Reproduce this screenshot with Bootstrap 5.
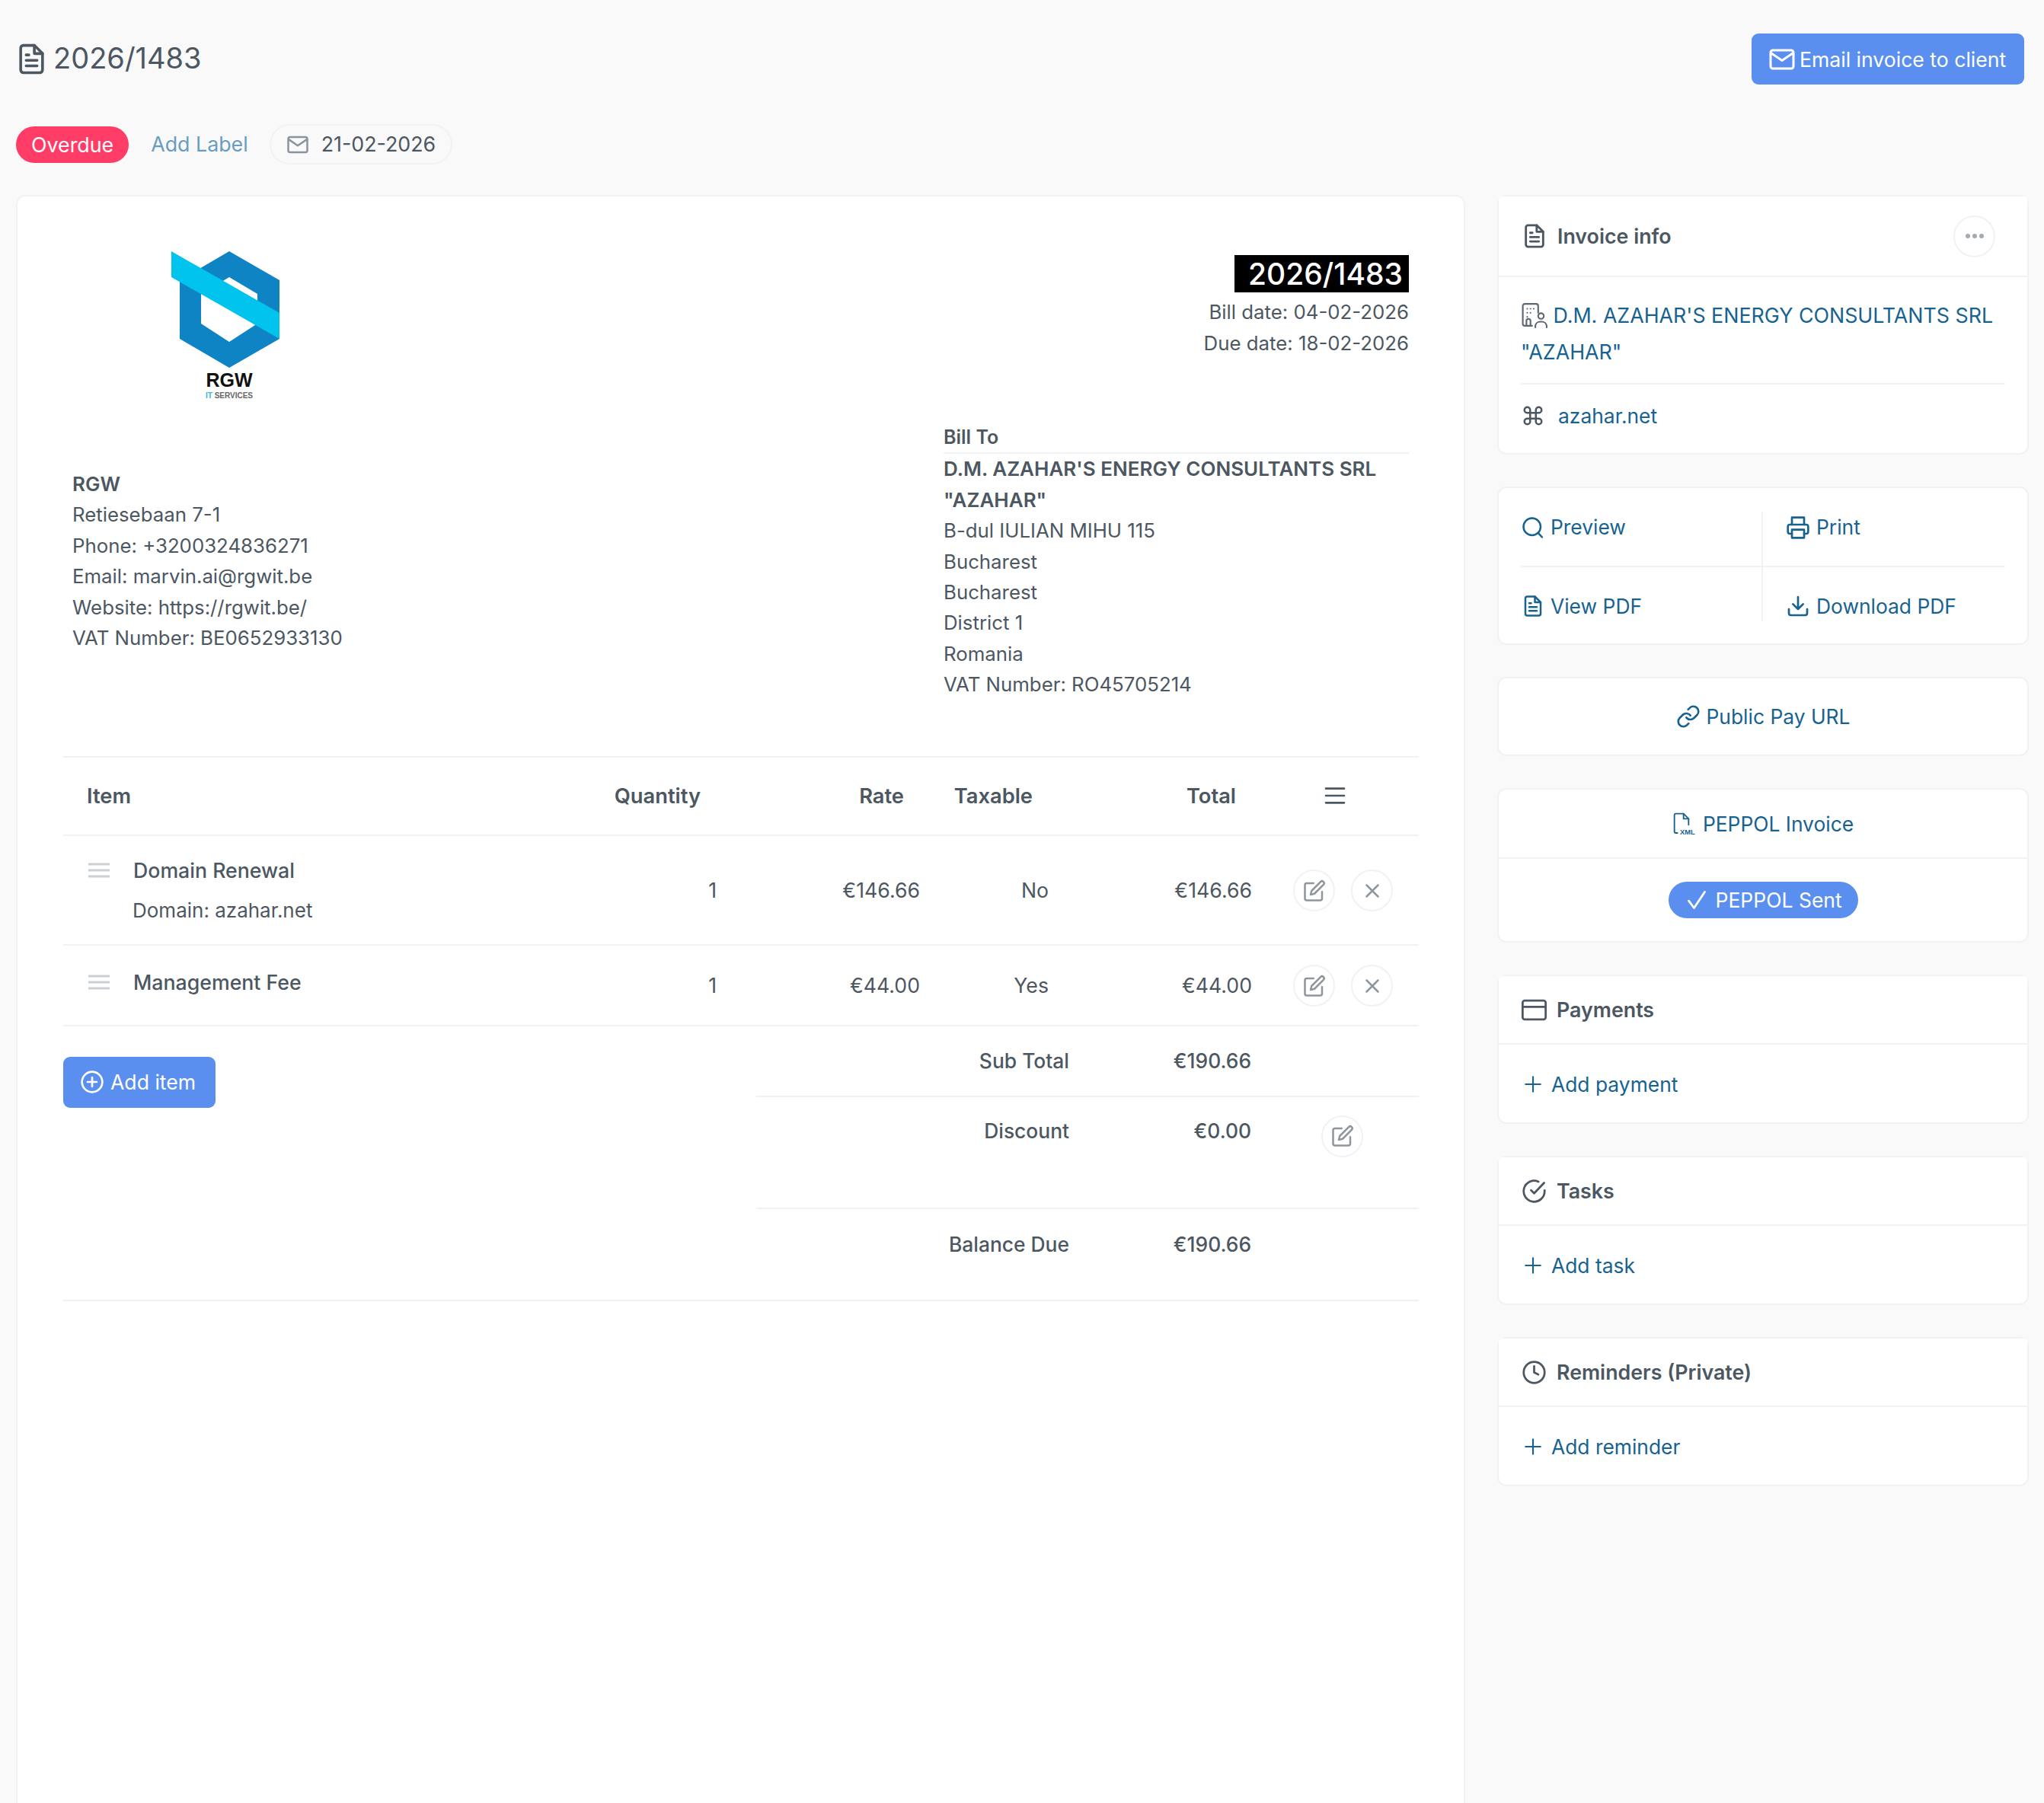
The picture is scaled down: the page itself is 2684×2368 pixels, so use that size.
<!DOCTYPE html>
<html lang="en">
  <head>
    <meta charset="UTF-8" />
    <meta name="viewport" content="width=device-width, initial-scale=1.0" />
    <title>Invoice 2026/1483</title>
    <link
      href="https://cdn.jsdelivr.net/npm/bootstrap@5.3.3/dist/css/bootstrap.min.css"
      rel="stylesheet"
    />
    <style>
      html, body { height: 100%; overflow: hidden; }
      body {
        background: #f9f9fa;
        color: #4c5762;
        font-family: "Inter", "Liberation Sans", sans-serif;
        font-size: 25.8px;
        line-height: 40.4px;
        padding: 44px 20px 0 21px;
      }
      svg.ico {
        fill: none;
        stroke: currentColor;
        stroke-width: 2;
        stroke-linecap: round;
        stroke-linejoin: round;
        flex-shrink: 0;
      }
      .page-title { height: 67px; }
      .page-title h1 { font-size: 38px; font-weight: 400; line-height: 60px; margin: -3px 0 0 7px; }
      .page-title svg { margin-left: -1px; }
      .blue-btn {
        background: #5a8ff0;
        border: 0;
        border-radius: 9px;
        color: #fff;
        font-size: 26.6px;
        line-height: 40px;
      }
      .blue-btn:hover { background: #5a8ff0; color: #fff; }
      .email-btn { gap: 5px; height: 67px; width: 358px; padding: 0 0 0 23px; margin-right: 6px; }
      .label-row { height: 53px; margin-top: 52px; margin-bottom: 40px; font-size: 26.8px; }
      .status-pill {
        background: #ff3c66;
        border-radius: 24px;
        color: #fff;
        height: 48px;
        line-height: 48px;
        padding: 0 20px;
        margin-left: 0;
      }
      .add-label { color: #6a9cc0; margin-left: 29px; text-decoration: none; }
      .date-pill {
        border: 2px solid #f1f2f4;
        border-radius: 27px;
        height: 53px;
        margin-left: 28px;
        padding: 0 20px;
      }
      .date-pill svg { color: #8b949c; }
      .sheet {
        background: #fff;
        border: 2px solid #f1f2f4;
        border-radius: 12px;
        min-height: 2300px;
        padding: 0 59px 0 60px;
        width: 1903px;
      }
      .sheet-top { padding: 77px 13px 0 12px; }
      .sheet-mid { padding: 0 13px 0 12px; }
      .logo-wrap { margin: -5px 0 0 130px; }
      .inv-number {
        background: #000;
        color: #fff;
        display: inline-block;
        font-size: 39px;
        font-weight: 500;
        line-height: 49px;
        margin-bottom: 5px;
        padding: 0 8px 0 18px;
      }
      .inv-dates { line-height: 41px; }
      .sender { margin-top: 92px; }
      .bill-to { margin-top: 30px; width: 611px; }
      .bill-head { border-bottom: 2px solid #f1f2f4; font-weight: 600; font-size: 25px; }
      .strong-line { font-weight: 600; font-size: 26px; }
      .items-table { margin: 73px 0 0; table-layout: fixed; width: 100%; color: #4c5762; font-size: 26.7px; }
      .items-table > :not(caption) > * > * {
        background: transparent;
        border-bottom: 2px solid #f1f2f4;
        color: #4c5762;
        padding: 2px 20px 0 0;
        vertical-align: middle;
      }
      .items-table thead tr { border-top: 2px solid #f1f2f4; height: 103px; }
      .items-table > thead > tr > th { font-size: 27.3px; font-weight: 600; padding-top: 2px; }
      .items-table > thead > tr > th.num { padding-right: 41px; }
      .items-table .num { text-align: right; }
      .items-table tbody tr.row-a { height: 144px; }
      .items-table tbody tr.row-b { height: 106px; }
      .items-table tr > .item-cell { padding-left: 33px; vertical-align: top; }
      .items-table thead tr > .item-cell { padding-left: 31px; vertical-align: middle; }
      .row-a .item-cell { padding-top: 25px; }
      .row-b .item-cell { padding-top: 28px; }
      .menu-ico { margin: -6px 74px 0 0; }
      .drag-ico { color: #ccd0d4; margin-right: 31px; }
      .item-name { font-weight: 500; }
      .item-desc { margin: 13px 0 0 58px; font-size: 26px; }
      .round-btn {
        align-items: center;
        background: #fff;
        border: 2px solid #f1f2f4;
        border-radius: 50%;
        color: #8f969d;
        display: inline-flex;
        height: 55px;
        justify-content: center;
        padding: 0;
        width: 55px;
      }
      .act-gap { gap: 21px; padding-right: 14px; }
      .sheet-foot { border-bottom: 2px solid #f1f2f4; height: 361px; }
      .add-item-btn { height: 67px; width: 200px; margin-top: 40px; padding: 0 0 0 22px; }
      .totals { width: 870px; font-size: 26.4px; }
      .total-row { border-bottom: 2px solid #f1f2f4; font-weight: 500; }
      .total-row:last-child { border-bottom: 0; }
      .total-sub { height: 93px; align-items: center; }
      .total-disc { height: 147px; padding-top: 24px; }
      .total-bal { padding-top: 26px; }
      .total-label { text-align: right; width: 411px; }
      .total-value { text-align: right; width: 239px; }
      .total-action { margin: 0 0 0 92px; }
      .side-stack { gap: 42px; width: 698px; }
      .side-card { border: 2px solid #f1f2f4; border-radius: 12px; --bs-card-bg: #fff; }
      .side-card .card-header {
        align-items: center;
        background: #fff;
        border-bottom: 2px solid #f1f2f4;
        display: flex;
        font-size: 26.8px;
        font-weight: 600;
        height: 90px;
        padding: 0 29px 0 30px;
      }
      .side-card .card-header svg { margin-right: 13px; }
      .side-card .card-body { padding: 0 29px; }
      .info-head.card-header { height: 106px; }
      .more-btn { margin-left: auto; margin-right: 13px; }
      .more-btn svg { margin: 0 !important; }
      .side-link { color: #17628f; font-size: 26.4px; text-decoration: none; }
      .company-link { border-bottom: 2px solid #f1f2f4; display: block; font-size: 26.8px; line-height: 47.5px; margin: 27px 0 0; padding-bottom: 17px; }
      .company-link svg { color: #5d6771; vertical-align: -7px; margin-left: 1px; }
      .site-row { padding: 21px 0 29px; }
      .site-row svg { color: #4c5762; margin: 0 18px 0 1px; }
      .acts-card .card-body { padding-top: 31px; padding-bottom: 29px; }
      .act-cell { padding: 0 0 30px 1px; }
      .act-cell.second { padding-bottom: 0; padding-top: 31px; }
      .act-line { border-bottom: 2px solid #f1f2f4; }
      .act-split { border-right: 2px solid #f1f2f4; }
      .act-cell.act-right { padding-left: 30px; }
      .one-line { height: 100px; }
      .peppol-top { height: 91px; border-bottom: 2px solid #f1f2f4; }
      .peppol-bot { height: 108px; }
      .peppol-pill {
        background: #5a8ff0;
        border-radius: 24px;
        color: #fff;
        font-size: 26.5px;
        height: 48px;
        padding: 0 0 0 23px;
        white-space: nowrap;
        width: 249px;
      }
      .peppol-pill svg.ico { margin-right: 3px; stroke-width: 2.4; }
      .add-row { height: 102px; padding-top: 2px !important; }
      .add-row svg { margin: 0 3px; }
      .xml-mark { fill: currentColor; stroke: none; font-family: "Liberation Sans", sans-serif; font-size: 7px; font-weight: 700; }
    </style>
  </head>
  <body>
    <!--icon sprite-->
    <svg width="0" height="0" class="position-absolute">
      <symbol id="i-file" viewBox="0 0 24 24"><path d="M14 2H6a2 2 0 0 0-2 2v16a2 2 0 0 0 2 2h12a2 2 0 0 0 2-2V8z"/><path d="M14 2v6h6M16 13H8M16 17H8M10 9H8"/></symbol>
      <symbol id="i-mail" viewBox="0 0 24 24"><rect x="2" y="4" width="20" height="16" rx="2"/><path d="M2.5 6.5 12 13l9.5-6.5"/></symbol>
      <symbol id="i-command" viewBox="0 0 24 24"><path d="M18 3a3 3 0 0 0-3 3v12a3 3 0 0 0 3 3 3 3 0 0 0 3-3 3 3 0 0 0-3-3H6a3 3 0 0 0-3 3 3 3 0 0 0 3 3 3 3 0 0 0 3-3V6a3 3 0 0 0-3-3 3 3 0 0 0-3 3 3 3 0 0 0 3 3h12a3 3 0 0 0 3-3 3 3 0 0 0-3-3z"/></symbol>
      <symbol id="i-search" viewBox="0 0 24 24"><circle cx="11" cy="11" r="9"/><path d="m21.5 22-4-4.3"/></symbol>
      <symbol id="i-print" viewBox="0 0 24 24"><path d="M6 9V2h12v7"/><path d="M6 18H4a2 2 0 0 1-2-2v-5a2 2 0 0 1 2-2h16a2 2 0 0 1 2 2v5a2 2 0 0 1-2 2h-2"/><rect x="6" y="14" width="12" height="8"/></symbol>
      <symbol id="i-down" viewBox="0 0 24 24"><path d="M21 15v4a2 2 0 0 1-2 2H5a2 2 0 0 1-2-2v-4"/><path d="m7 10 5 5 5-5M12 15V3"/></symbol>
      <symbol id="i-link" viewBox="0 0 24 24"><path d="M10 13a5 5 0 0 0 7.54.54l3-3a5 5 0 0 0-7.07-7.07l-1.72 1.71"/><path d="M14 11a5 5 0 0 0-7.54-.54l-3 3a5 5 0 0 0 7.07 7.07l1.71-1.71"/></symbol>
      <symbol id="i-card" viewBox="0 0 24 24"><rect x="1" y="3" width="22" height="18" rx="2"/><path d="M1 9h22"/></symbol>
      <symbol id="i-task" viewBox="0 0 24 24"><path d="M22 11.1v.9a10 10 0 1 1-5.9-9.1"/><path d="m21.5 4-9.5 10-3-3"/></symbol>
      <symbol id="i-clock" viewBox="0 0 24 24"><circle cx="12" cy="12" r="10"/><path d="M12 6v6l4 2"/></symbol>
      <symbol id="i-plus" viewBox="0 0 24 24"><path d="M12 3v18M3 12h18"/></symbol>
      <symbol id="i-plusc" viewBox="0 0 24 24"><circle cx="12" cy="12" r="10"/><path d="M12 7.5v9M7.5 12h9"/></symbol>
      <symbol id="i-edit" viewBox="0 0 24 24"><path d="M11 4H4a2 2 0 0 0-2 2v14a2 2 0 0 0 2 2h14a2 2 0 0 0 2-2v-7"/><path d="M18.5 2.5a2.12 2.12 0 0 1 3 3L12 15l-4 1 1-4z"/></symbol>
      <symbol id="i-x" viewBox="0 0 24 24"><path d="M18 6 6 18M6 6l12 12"/></symbol>
      <symbol id="i-menu" viewBox="0 0 24 24"><path d="M3 5h18M3 12h18M3 19h18"/></symbol>
      <symbol id="i-check" viewBox="0 0 24 24"><path d="m3 13 6 8L21 3"/></symbol>
      <symbol id="i-build" viewBox="0 0 32 32"><path d="M13 29H4a2.500 2.500 0 0 1-2.500-2.500v-22A2.500 2.500 0 0 1 4 2h14a2.500 2.500 0 0 1 2.500 2.500V13"/><path d="M7 8h.01M11 8h.01M15 8h.01M7 13h.01M11 13h.01M7 18h.01"/><path d="M6 28v-5a2 2 0 0 1 5 0v5"/><circle cx="24" cy="17" r="3.500"/><path d="M17 31v-2a6 6 0 0 1 6-5h2a6 6 0 0 1 6 5v2"/></symbol>
    </svg>

    <!--title-->
    <div class="page-title d-flex justify-content-between align-items-center">
      <div class="d-flex align-items-center">
        <svg class="ico" width="43" height="43"><use href="#i-file" /></svg>
        <h1>2026/1483</h1>
      </div>
      <button class="btn blue-btn email-btn d-flex align-items-center" type="button">
        <svg class="ico" width="36" height="36"><use href="#i-mail" /></svg>
        <span>Email invoice to client</span>
      </button>
    </div>

    <div class="label-row d-flex align-items-center">
      <span class="status-pill">Overdue</span>
      <a class="add-label" href="#">Add Label</a>
      <span class="date-pill d-flex align-items-center gap-3">
        <svg class="ico" width="30" height="30"><use href="#i-mail" /></svg>
        <span>21-02-2026</span>
      </span>
    </div>

    <div class="d-flex justify-content-between">
      <!--invoice sheet-->
      <main class="sheet">
        <div class="sheet-top d-flex justify-content-between align-items-start">
          <div class="logo-wrap">
            <svg width="144" height="194" viewBox="224 330 144 194">
              <path fill="#0f84c4" fill-rule="evenodd" d="M300 330 366 368V445L300 483 235 445V368ZM300 364 263 386V425L300 449 337 425V386Z" />
              <path fill="#00c4ee" d="M224 330 366 411V445L224 364Z" />
              <text x="300" y="508" text-anchor="middle" font-family="Liberation Sans, sans-serif" font-size="25" font-weight="700" fill="#111">RGW</text>
              <text x="300" y="523" text-anchor="middle" font-family="Liberation Sans, sans-serif" font-size="10" font-weight="700"><tspan fill="#35b8e0">IT</tspan><tspan fill="#666"> SERVICES</tspan></text>
            </svg>
          </div>
          <div class="text-end">
            <div class="inv-number">2026/1483</div>
            <div class="inv-dates">Bill date: 04-02-2026</div>
            <div class="inv-dates">Due date: 18-02-2026</div>
          </div>
        </div>
        <div class="sheet-mid d-flex justify-content-between">
          <div class="sender">
            <div class="strong-line">RGW</div>
            <div>Retiesebaan 7-1</div>
            <div>Phone: +3200324836271</div>
            <div>Email: marvin.ai@rgwit.be</div>
            <div>Website: https://rgwit.be/</div>
            <div>VAT Number: BE0652933130</div>
          </div>
          <div class="bill-to">
            <div class="bill-head">Bill To</div>
            <div class="strong-line">D.M. AZAHAR'S ENERGY CONSULTANTS SRL "AZAHAR"</div>
            <div>B-dul IULIAN MIHU 115</div>
            <div>Bucharest</div>
            <div>Bucharest</div>
            <div>District 1</div>
            <div>Romania</div>
            <div>VAT Number: RO45705214</div>
          </div>
        </div>

        <!--line items-->
        <table class="table items-table">
          <colgroup>
            <col style="width: 708px" />
            <col style="width: 170px" />
            <col style="width: 267px" />
            <col style="width: 169px" />
            <col style="width: 267px" />
            <col />
          </colgroup>
          <thead>
            <tr>
              <th class="item-cell">Item</th>
              <th class="num">Quantity</th>
              <th class="num">Rate</th>
              <th class="num">Taxable</th>
              <th class="num">Total</th>
              <th class="text-end"><svg class="ico menu-ico" width="32" height="32"><use href="#i-menu" /></svg></th>
            </tr>
          </thead>
          <tbody>
            <tr class="row-a">
              <td class="item-cell">
                <div class="d-flex align-items-center">
                  <svg class="drag-ico" width="28" height="20" viewBox="0 0 28 20"><path stroke="currentColor" stroke-width="3" d="M0 2h28M0 10h28M0 18h28" /></svg>
                  <span class="item-name">Domain Renewal</span>
                </div>
                <div class="item-desc">Domain: azahar.net</div>
              </td>
              <td class="num">1</td>
              <td class="num">€146.66</td>
              <td class="num">No</td>
              <td class="num">€146.66</td>
              <td>
                <div class="d-flex justify-content-end act-gap">
                  <button class="round-btn" type="button"><svg class="ico" width="30" height="30"><use href="#i-edit" /></svg></button>
                  <button class="round-btn" type="button"><svg class="ico" width="30" height="30"><use href="#i-x" /></svg></button>
                </div>
              </td>
            </tr>
            <tr class="row-b">
              <td class="item-cell">
                <div class="d-flex align-items-center">
                  <svg class="drag-ico" width="28" height="20" viewBox="0 0 28 20"><path stroke="currentColor" stroke-width="3" d="M0 2h28M0 10h28M0 18h28" /></svg>
                  <span class="item-name">Management Fee</span>
                </div>
              </td>
              <td class="num">1</td>
              <td class="num">€44.00</td>
              <td class="num">Yes</td>
              <td class="num">€44.00</td>
              <td>
                <div class="d-flex justify-content-end act-gap">
                  <button class="round-btn" type="button"><svg class="ico" width="30" height="30"><use href="#i-edit" /></svg></button>
                  <button class="round-btn" type="button"><svg class="ico" width="30" height="30"><use href="#i-x" /></svg></button>
                </div>
              </td>
            </tr>
          </tbody>
        </table>

        <div class="sheet-foot d-flex justify-content-between">
          <button class="btn blue-btn add-item-btn d-flex align-items-center gap-2" type="button">
            <svg class="ico" width="32" height="32"><use href="#i-plusc" /></svg>
            <span>Add item</span>
          </button>
          <div class="totals">
            <div class="total-row total-sub d-flex">
              <div class="total-label">Sub Total</div>
              <div class="total-value">€190.66</div>
            </div>
            <div class="total-row total-disc d-flex">
              <div class="total-label">Discount</div>
              <div class="total-value">€0.00</div>
              <div class="total-action"><button class="round-btn" type="button"><svg class="ico" width="30" height="30"><use href="#i-edit" /></svg></button></div>
            </div>
            <div class="total-row total-bal d-flex">
              <div class="total-label">Balance Due</div>
              <div class="total-value">€190.66</div>
            </div>
          </div>
        </div>
      </main>

      <!--sidebar-->
      <aside class="side-stack d-flex flex-column">
        <div class="card side-card">
          <div class="card-header info-head">
            <svg class="ico" width="34" height="34"><use href="#i-file" /></svg>
            Invoice info
            <button class="round-btn more-btn" type="button">
              <svg width="26" height="8" viewBox="0 0 26 8"><circle cx="4" cy="4" r="3" fill="#a4aab0" /><circle cx="13" cy="4" r="3" fill="#a4aab0" /><circle cx="22" cy="4" r="3" fill="#a4aab0" /></svg>
            </button>
          </div>
          <div class="card-body">
            <a class="side-link company-link" href="#"><svg class="ico" width="34" height="34"><use href="#i-build" /></svg> D.M. AZAHAR'S ENERGY CONSULTANTS SRL "AZAHAR"</a>
            <div class="site-row d-flex align-items-center">
              <svg class="ico" width="30" height="30"><use href="#i-command" /></svg>
              <a class="side-link" href="#">azahar.net</a>
            </div>
          </div>
        </div>

        <div class="card side-card acts-card">
          <div class="card-body">
            <div class="row g-0 act-line">
              <div class="col-6 act-cell act-split"><a class="side-link d-flex align-items-center gap-2" href="#"><svg class="ico" width="30" height="30"><use href="#i-search" /></svg>Preview</a></div>
              <div class="col-6 act-cell act-right"><a class="side-link d-flex align-items-center gap-2" href="#"><svg class="ico" width="32" height="32"><use href="#i-print" /></svg>Print</a></div>
            </div>
            <div class="row g-0">
              <div class="col-6 act-cell second act-split"><a class="side-link d-flex align-items-center gap-2" href="#"><svg class="ico" width="30" height="30"><use href="#i-file" /></svg>View PDF</a></div>
              <div class="col-6 act-cell second act-right"><a class="side-link d-flex align-items-center gap-2" href="#"><svg class="ico" width="32" height="32"><use href="#i-down" /></svg>Download PDF</a></div>
            </div>
          </div>
        </div>

        <div class="card side-card">
          <div class="card-body one-line d-flex justify-content-center align-items-center">
            <a class="side-link d-flex align-items-center gap-2" href="#"><svg class="ico" width="32" height="32"><use href="#i-link" /></svg>Public Pay URL</a>
          </div>
        </div>

        <div class="card side-card">
          <div class="peppol-top d-flex justify-content-center align-items-center">
            <a class="side-link d-flex align-items-center gap-2" href="#">
              <svg class="ico" style="stroke-width: 1.4" width="32" height="32" viewBox="0 0 24 24"><path d="M5 21H3.500a1.500 1.500 0 0 1-1.500-1.500v-16A1.500 1.500 0 0 1 3.500 2H11l5 5v6" /><path d="M11 2v5h5" /><text class="xml-mark" x="7.500" y="22.500">XML</text></svg>
              PEPPOL Invoice
            </a>
          </div>
          <div class="peppol-bot d-flex justify-content-center align-items-center">
            <span class="peppol-pill d-flex align-items-center gap-2">
              <svg class="ico" width="28" height="28"><use href="#i-check" /></svg>
              PEPPOL Sent
            </span>
          </div>
        </div>

        <div class="card side-card">
          <div class="card-header"><svg class="ico" width="33" height="33"><use href="#i-card" /></svg>Payments</div>
          <div class="card-body add-row d-flex align-items-center">
            <a class="side-link d-flex align-items-center gap-2" href="#"><svg class="ico" width="26" height="26"><use href="#i-plus" /></svg>Add payment</a>
          </div>
        </div>

        <div class="card side-card">
          <div class="card-header"><svg class="ico" width="33" height="33"><use href="#i-task" /></svg>Tasks</div>
          <div class="card-body add-row d-flex align-items-center">
            <a class="side-link d-flex align-items-center gap-2" href="#"><svg class="ico" width="26" height="26"><use href="#i-plus" /></svg>Add task</a>
          </div>
        </div>

        <div class="card side-card">
          <div class="card-header"><svg class="ico" width="33" height="33"><use href="#i-clock" /></svg>Reminders (Private)</div>
          <div class="card-body add-row d-flex align-items-center">
            <a class="side-link d-flex align-items-center gap-2" href="#"><svg class="ico" width="26" height="26"><use href="#i-plus" /></svg>Add reminder</a>
          </div>
        </div>
      </aside>
    </div>

    <script src="https://cdn.jsdelivr.net/npm/bootstrap@5.3.3/dist/js/bootstrap.bundle.min.js"></script>
  </body>
</html>
